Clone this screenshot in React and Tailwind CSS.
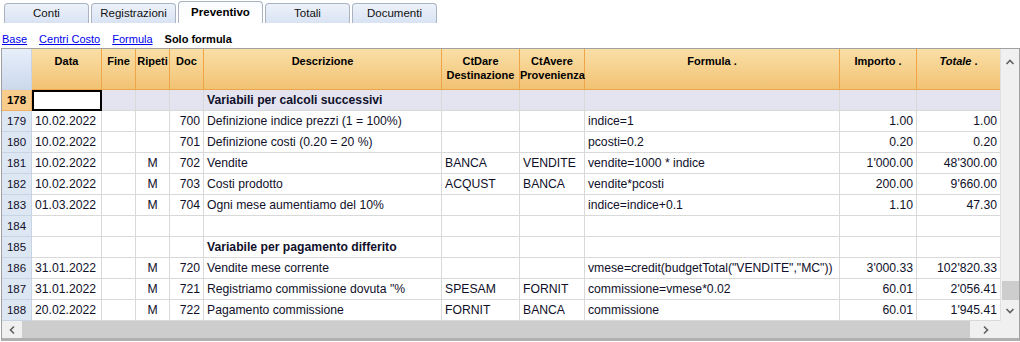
import React from "react"

const font = { fontFamily: '"Liberation Sans", Arial, sans-serif' }

const tabs = ["Conti", "Registrazioni", "Preventivo", "Totali", "Documenti"]

const cols = "grid grid-cols-[30px_70px_34px_34px_34px_238px_78px_65px_255px_77px_83px]"

const rows = [
  { n: 178, section: "Variabili per calcoli successivi", sel: true },
  { n: 179, d: "10.02.2022", r: "", doc: "700", desc: "Definizione indice prezzi (1 = 100%)", dare: "", avere: "", f: "indice=1", imp: "1.00", tot: "1.00" },
  { n: 180, d: "10.02.2022", r: "", doc: "701", desc: "Definizione costi (0.20 = 20 %)", dare: "", avere: "", f: "pcosti=0.2", imp: "0.20", tot: "0.20" },
  { n: 181, d: "10.02.2022", r: "M", doc: "702", desc: "Vendite", dare: "BANCA", avere: "VENDITE", f: "vendite=1000 * indice", imp: "1'000.00", tot: "48'300.00" },
  { n: 182, d: "10.02.2022", r: "M", doc: "703", desc: "Costi prodotto", dare: "ACQUST", avere: "BANCA", f: "vendite*pcosti", imp: "200.00", tot: "9'660.00" },
  { n: 183, d: "01.03.2022", r: "M", doc: "704", desc: "Ogni mese aumentiamo del 10%", dare: "", avere: "", f: "indice=indice+0.1", imp: "1.10", tot: "47.30" },
  { n: 184 },
  { n: 185, section: "Variabile per pagamento differito" },
  { n: 186, d: "31.01.2022", r: "M", doc: "720", desc: "Vendite mese corrente", dare: "", avere: "", f: 'vmese=credit(budgetTotal("VENDITE","MC"))', imp: "3'000.33", tot: "102'820.33" },
  { n: 187, d: "31.01.2022", r: "M", doc: "721", desc: 'Registriamo commissione dovuta "%', dare: "SPESAM", avere: "FORNIT", f: "commissione=vmese*0.02", imp: "60.01", tot: "2'056.41" },
  { n: 188, d: "20.02.2022", r: "M", doc: "722", desc: "Pagamento commissione", dare: "FORNIT", avere: "BANCA", f: "commissione", imp: "60.01", tot: "1'945.41" },
]

const cell = "h-[21px] border-r border-b border-[#d9d9d9] px-[3px] leading-[20px] whitespace-nowrap overflow-hidden"

function Row({ row }) {
  const bg = row.sel ? "bg-[#e3e4f0]" : "bg-white"
  return (
    <div className={`${cols} text-[12.2px] text-[#10102a]`}>
      <div
        className={`h-[21px] border-r border-b leading-[20px] text-center text-[11.5px] ${
          row.sel ? "bg-[#f8cc8a] border-[#f0b060] font-bold text-black" : "bg-[#dde6f3] border-[#c8d3e3]"
        }`}
      >
        {row.n}
      </div>
      {row.sel ? (
        <div className="h-[21px] border-2 border-black bg-white" />
      ) : (
        <div className={`${cell} ${bg}`}>{row.d}</div>
      )}
      <div className={`${cell} ${bg}`} />
      <div className={`${cell} ${bg} text-center`}>{row.r}</div>
      <div className={`${cell} ${bg} text-right`}>{row.doc}</div>
      <div className={`${cell} ${bg} ${row.section ? "font-bold" : ""}`}>{row.section || row.desc}</div>
      <div className={`${cell} ${bg}`}>{row.dare}</div>
      <div className={`${cell} ${bg}`}>{row.avere}</div>
      <div className={`${cell} ${bg}`}>{row.f}</div>
      <div className={`${cell} ${bg} text-right`}>{row.imp}</div>
      <div className={`${cell} ${bg} text-right border-r-0`}>{row.tot}</div>
    </div>
  )
}

function Header() {
  const h = "h-[41px] border-r border-b border-[#f0a448] pt-[5px] text-center text-[11px] font-bold leading-[14px] text-black"
  return (
    <div className={`${cols} bg-gradient-to-b from-[#fadfa6] to-[#f1c272]`}>
      <div className="h-[41px] border-r border-b border-[#c8d3e3] bg-gradient-to-b from-[#e6eef9] to-[#ccd9ec]" />
      <div className={h}>Data</div>
      <div className={h}>Fine</div>
      <div className={h}>Ripeti</div>
      <div className={h}>Doc</div>
      <div className={h}>Descrizione</div>
      <div className={h}>
        CtDare
        <br />
        Destinazione
      </div>
      <div className={h}>
        CtAvere
        <br />
        Provenienza
      </div>
      <div className={h}>Formula .</div>
      <div className={h}>Importo .</div>
      <div className={`${h} border-r-0`}>
        <i>Totale</i> .
      </div>
    </div>
  )
}

export default function App() {
  return (
    <div className="w-[1020px] h-[342px] bg-white overflow-hidden" style={font}>
      {/* tabs */}
      <div className="flex items-end gap-[2px] h-[23px] pl-[4px]">
        {tabs.map((t) => {
          const active = t === "Preventivo"
          return (
            <div
              key={t}
              className={`w-[85px] rounded-t-[4px] border border-b-0 border-[#a9b3c2] text-center text-[11.5px] ${
                active
                  ? "h-[22px] leading-[20px] bg-gradient-to-b from-[#fbfcfe] to-white font-bold text-black"
                  : "h-[20px] leading-[19px] bg-gradient-to-b from-[#edf2fa] to-[#d9e3f3] text-[#111]"
              }`}
            >
              {t}
            </div>
          )
        })}
      </div>

      {/* links */}
      <div className="flex items-start gap-[12px] h-[25px] pt-[9px] pl-[2px] text-[11px] leading-[14px]">
        <span className="text-[#0000ee] underline">Base</span>
        <span className="text-[#0000ee] underline">Centri Costo</span>
        <span className="text-[#0000ee] underline">Formula</span>
        <span className="font-bold text-black">Solo formula</span>
      </div>

      {/* grid */}
      <div className="ml-[1px] w-[1019px] h-[293px] border border-[#a0a0a0] border-b-[3px] border-b-[#b0b0b0] flex flex-col">
        <div className="flex h-[272px]">
          <div className="w-[998px] overflow-hidden">
            <Header />
            {rows.map((r) => (
              <Row key={r.n} row={r} />
            ))}
          </div>
          <div className="w-[19px] bg-[#f0f0f0] border-l border-[#e0e0e0] flex flex-col items-center">
            <svg width="10" height="8" viewBox="0 0 10 8" className="mt-[9px]">
              <path d="M1.5 6 L5 2.5 L8.5 6" fill="none" stroke="#606060" strokeWidth="1.6" />
            </svg>
            <div className="flex-1" />
            <div className="w-[17px] h-[19px] bg-[#cdcdcd] mb-[7px]" />
            <svg width="10" height="8" viewBox="0 0 10 8" className="mb-[6px]">
              <path d="M1.5 2 L5 5.5 L8.5 2" fill="none" stroke="#606060" strokeWidth="1.6" />
            </svg>
          </div>
        </div>
        <div className="flex h-[17px]">
          <div className="w-[998px] bg-[#f0f0f0] flex items-center">
            <svg width="10" height="10" viewBox="0 0 10 10" className="ml-[6px] mr-[4px]">
              <path d="M6 1.5 L2.5 5 L6 8.5" fill="none" stroke="#606060" strokeWidth="1.6" />
            </svg>
            <div className="flex-1 h-[17px] bg-[#cdcdcd]" />
            <div className="w-[30px] flex justify-center">
              <svg width="10" height="10" viewBox="0 0 10 10">
                <path d="M4 1.5 L7.5 5 L4 8.5" fill="none" stroke="#606060" strokeWidth="1.6" />
              </svg>
            </div>
          </div>
          <div className="w-[19px] bg-[#f0f0f0]" />
        </div>
      </div>
    </div>
  )
}
